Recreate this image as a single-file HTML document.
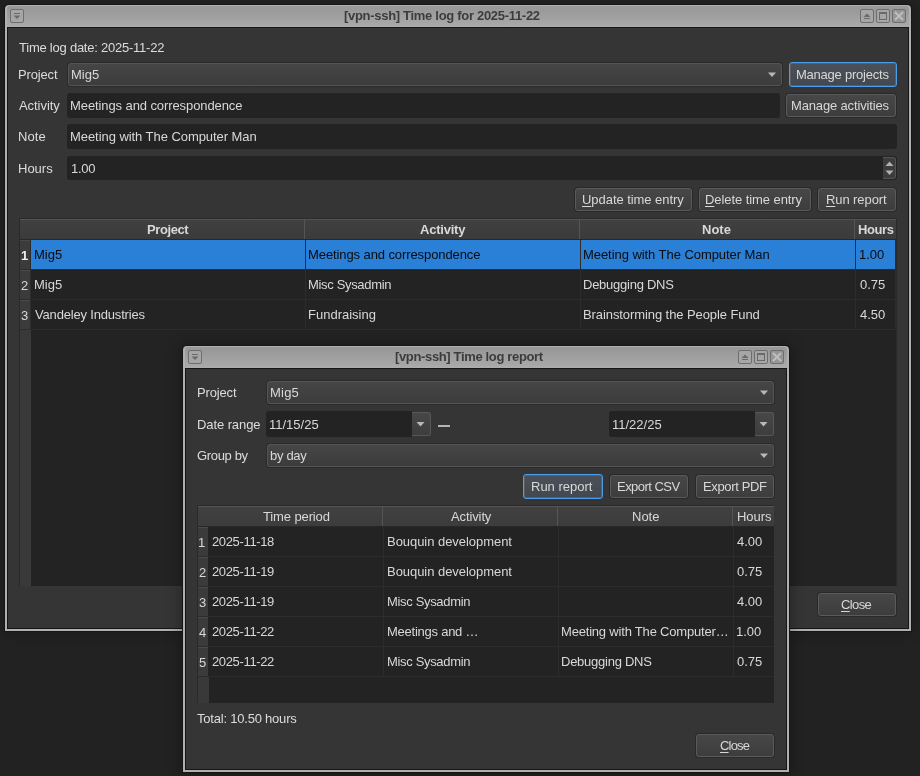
<!DOCTYPE html>
<html><head><meta charset="utf-8"><style>
html,body{margin:0;padding:0;width:920px;height:776px;overflow:hidden;background:#222222;font-family:"Liberation Sans", sans-serif;}
u{text-decoration:underline;text-underline-offset:2px;}
</style></head><body>
<div style="position:absolute;left:0;top:0;width:920px;height:776px;background:#222222"></div><div style="position:absolute;left:5px;top:5px;width:906px;height:626px;background:#b0b0b0;border-radius:4px 4px 0 0;box-shadow:0 0 0 1px #151515,0 0 14px 3px rgba(0,0,0,0.2);"></div><div style="position:absolute;left:7px;top:6px;width:902px;height:21px;background:linear-gradient(#989898,#9a9a9a 20%,#a8a8a8 90%,#adadad);border-radius:3px 3px 0 0;"></div><div style="position:absolute;left:7px;top:27px;width:902px;height:602px;background:#161616;"></div><div style="position:absolute;left:8px;top:28px;width:900px;height:600px;background:#353535;"></div><div style="position:absolute;left:10px;top:9px;width:14px;height:14px;border:1px solid #6e6e6e;border-radius:2px;box-sizing:border-box;background:#a6a6a6;"></div><svg style="position:absolute;left:10px;top:9px" width="14" height="14"><rect x="4" y="4" width="6" height="1" fill="#6a6a6a"/><path d="M3.5 6.5 L10.5 6.5 L7 10 Z" fill="#6a6a6a"/></svg><div style="position:absolute;left:860px;top:9px;width:14px;height:14px;border:1px solid #6e6e6e;border-radius:2px;box-sizing:border-box;background:#a6a6a6;"></div><svg style="position:absolute;left:860px;top:9px" width="14" height="14"><path d="M3.5 8 L10.5 8 L7 4.5 Z" fill="#6a6a6a"/><rect x="4" y="9" width="6" height="1" fill="#6a6a6a"/></svg><div style="position:absolute;left:876px;top:9px;width:14px;height:14px;border:1px solid #6e6e6e;border-radius:2px;box-sizing:border-box;background:#a6a6a6;"></div><svg style="position:absolute;left:876px;top:9px" width="14" height="14"><rect x="3.5" y="3.5" width="7" height="7" fill="none" stroke="#6a6a6a" stroke-width="1"/><rect x="3" y="3" width="8" height="2" fill="#6a6a6a"/></svg><div style="position:absolute;left:892px;top:9px;width:14px;height:14px;border:1px solid #6e6e6e;border-radius:2px;box-sizing:border-box;background:#959595;"></div><svg style="position:absolute;left:892px;top:9px" width="14" height="14"><path d="M3 3 L11 11 M11 3 L3 11" stroke="#bebebe" stroke-width="2"/></svg><span id="t0" style="position:absolute;left:344.00px;top:8.00px;line-height:16px;font-size:13px;font-weight:bold;color:#3c3c3c;white-space:pre;will-change:transform;letter-spacing:-0.300px;">[vpn-ssh] Time log for 2025-11-22</span><span id="t1" style="position:absolute;left:19.00px;top:39.50px;line-height:16px;font-size:13px;font-weight:normal;color:#dcdcdc;white-space:pre;will-change:transform;letter-spacing:-0.233px;">Time log date: 2025-11-22</span><span id="t2" style="position:absolute;left:18.36px;top:66.50px;line-height:16px;font-size:13px;font-weight:normal;color:#dcdcdc;white-space:pre;will-change:transform;letter-spacing:-0.160px;">Project</span><div style="position:absolute;left:68px;top:63px;width:714px;height:23px;box-sizing:border-box;border:1px solid #555;border-radius:3px;background:linear-gradient(#464646,#3c3c3c);box-shadow:0 0 0 1px rgba(0,0,0,0.2);"></div><svg style="position:absolute;left:766.5px;top:70.5px" width="10" height="8"><path d="M1 1.5 L9 1.5 L5 6 Z" fill="#b8b8b8"/></svg><span id="t3" style="position:absolute;left:71.30px;top:66.50px;line-height:16px;font-size:13px;font-weight:normal;color:#d8d8d8;white-space:pre;will-change:transform;letter-spacing:0.000px;">Mig5</span><div style="position:absolute;left:789px;top:62px;width:108px;height:25px;box-sizing:border-box;border:1px solid #4a9eea;border-radius:3px;background:linear-gradient(#4c5159,#434850);box-shadow:inset 0 0 0 1px #5a5d62;"></div><span id="t4" style="position:absolute;left:796.20px;top:66.50px;line-height:16px;font-size:13px;font-weight:normal;color:#d8d8d8;white-space:pre;will-change:transform;letter-spacing:-0.229px;">Manage projects</span><span id="t5" style="position:absolute;left:19.00px;top:97.50px;line-height:16px;font-size:13px;font-weight:normal;color:#dcdcdc;white-space:pre;will-change:transform;letter-spacing:-0.057px;">Activity</span><div style="position:absolute;left:67px;top:93px;width:713px;height:25px;background:#232323;border-radius:3px;"></div><span id="t6" style="position:absolute;left:69.80px;top:97.50px;line-height:16px;font-size:13px;font-weight:normal;color:#d8d8d8;white-space:pre;will-change:transform;letter-spacing:-0.092px;">Meetings and correspondence</span><div style="position:absolute;left:786px;top:94px;width:110px;height:23px;box-sizing:border-box;border:1px solid #5a5a5a;border-radius:3px;background:linear-gradient(#474747,#3d3d3d);box-shadow:0 0 0 1px rgba(0,0,0,0.22);"></div><span id="t7" style="position:absolute;left:791.42px;top:97.50px;line-height:16px;font-size:13px;font-weight:normal;color:#d8d8d8;white-space:pre;will-change:transform;letter-spacing:-0.150px;">Manage activities</span><span id="t8" style="position:absolute;left:18.36px;top:128.50px;line-height:16px;font-size:13px;font-weight:normal;color:#dcdcdc;white-space:pre;will-change:transform;letter-spacing:0.107px;">Note</span><div style="position:absolute;left:67px;top:124px;width:830px;height:25px;background:#232323;border-radius:3px;"></div><span id="t9" style="position:absolute;left:69.80px;top:128.50px;line-height:16px;font-size:13px;font-weight:normal;color:#d8d8d8;white-space:pre;will-change:transform;letter-spacing:-0.057px;">Meeting with The Computer Man</span><span id="t10" style="position:absolute;left:18.36px;top:160.50px;line-height:16px;font-size:13px;font-weight:normal;color:#dcdcdc;white-space:pre;will-change:transform;letter-spacing:0.000px;">Hours</span><div style="position:absolute;left:67px;top:156px;width:830px;height:24px;background:#232323;border-radius:3px;"></div><span id="t11" style="position:absolute;left:71.30px;top:160.50px;line-height:16px;font-size:13px;font-weight:normal;color:#d8d8d8;white-space:pre;will-change:transform;letter-spacing:-0.267px;">1.00</span><div style="position:absolute;left:883px;top:157px;width:13px;height:22px;box-sizing:border-box;border:1px solid #555;border-left:none;border-radius:0 3px 3px 0;background:#3c3c3c;"></div><svg style="position:absolute;left:883px;top:157px" width="13" height="22"><path d="M2.5 9 L10.5 9 L6.5 4.5 Z" fill="#b0b0b0"/><path d="M2.5 13.5 L10.5 13.5 L6.5 18 Z" fill="#b0b0b0"/></svg><div style="position:absolute;left:575px;top:188px;width:117px;height:23px;box-sizing:border-box;border:1px solid #5a5a5a;border-radius:3px;background:linear-gradient(#474747,#3d3d3d);box-shadow:0 0 0 1px rgba(0,0,0,0.22);"></div><span id="t12" style="position:absolute;left:582.00px;top:192.00px;line-height:16px;font-size:13px;font-weight:normal;color:#d8d8d8;white-space:pre;will-change:transform;letter-spacing:-0.050px;"><u>U</u>pdate time entry</span><div style="position:absolute;left:699px;top:188px;width:112px;height:23px;box-sizing:border-box;border:1px solid #5a5a5a;border-radius:3px;background:linear-gradient(#474747,#3d3d3d);box-shadow:0 0 0 1px rgba(0,0,0,0.22);"></div><span id="t13" style="position:absolute;left:705.10px;top:192.00px;line-height:16px;font-size:13px;font-weight:normal;color:#d8d8d8;white-space:pre;will-change:transform;letter-spacing:-0.075px;"><u>D</u>elete time entry</span><div style="position:absolute;left:818px;top:188px;width:78px;height:23px;box-sizing:border-box;border:1px solid #5a5a5a;border-radius:3px;background:linear-gradient(#474747,#3d3d3d);box-shadow:0 0 0 1px rgba(0,0,0,0.22);"></div><span id="t14" style="position:absolute;left:826.10px;top:192.00px;line-height:16px;font-size:13px;font-weight:normal;color:#d8d8d8;white-space:pre;will-change:transform;letter-spacing:-0.089px;"><u>R</u>un report</span><div style="position:absolute;left:19px;top:218px;width:878px;height:368px;background:#2a2a2a;"></div><div style="position:absolute;left:20px;top:219px;width:876px;height:367px;background:#232323;"></div><div style="position:absolute;left:20px;top:219px;width:876px;height:20px;background:linear-gradient(#404040,#3b3b3b);border-top:1px solid #555;box-sizing:border-box;"></div><div style="position:absolute;left:20px;top:239px;width:876px;height:1px;background:#2b2724;"></div><div style="position:absolute;left:304px;top:220px;width:1px;height:19px;background:#555;"></div><div style="position:absolute;left:579px;top:220px;width:1px;height:19px;background:#555;"></div><div style="position:absolute;left:854px;top:220px;width:1px;height:19px;background:#555;"></div><div style="position:absolute;left:20px;top:240px;width:10px;height:29px;background:#3b3b3b;border-top:1px solid #4a4a4a;box-sizing:border-box;"></div><div style="position:absolute;left:30px;top:240px;width:1px;height:30px;background:#2c2c2c;"></div><div style="position:absolute;left:31px;top:240px;width:864px;height:29px;background:#2a7fd6;"></div><div style="position:absolute;left:31px;top:269px;width:864px;height:1px;background:#2c2c2c;"></div><div style="position:absolute;left:20px;top:269px;width:10px;height:1px;background:#2c2c2c;"></div><span id="t15" style="position:absolute;left:21.10px;top:247.50px;line-height:16px;font-size:13px;font-weight:bold;color:#f0f0f0;white-space:pre;will-change:transform;letter-spacing:-4.000px;">1</span><span id="t16" style="position:absolute;left:34.20px;top:246.50px;line-height:16px;font-size:13px;font-weight:normal;color:#0c0c0c;white-space:pre;will-change:transform;letter-spacing:0.000px;">Mig5</span><span id="t17" style="position:absolute;left:308.30px;top:246.50px;line-height:16px;font-size:13px;font-weight:normal;color:#0c0c0c;white-space:pre;will-change:transform;letter-spacing:-0.092px;">Meetings and correspondence</span><span id="t18" style="position:absolute;left:583.30px;top:246.50px;line-height:16px;font-size:13px;font-weight:normal;color:#0c0c0c;white-space:pre;will-change:transform;letter-spacing:-0.057px;">Meeting with The Computer Man</span><span id="t19" style="position:absolute;left:858.80px;top:246.50px;line-height:16px;font-size:13px;font-weight:normal;color:#0c0c0c;white-space:pre;will-change:transform;">1.00</span><div style="position:absolute;left:20px;top:270px;width:10px;height:29px;background:#3b3b3b;border-top:1px solid #4a4a4a;box-sizing:border-box;"></div><div style="position:absolute;left:30px;top:270px;width:1px;height:30px;background:#2c2c2c;"></div><div style="position:absolute;left:31px;top:299px;width:864px;height:1px;background:#2c2c2c;"></div><div style="position:absolute;left:20px;top:299px;width:10px;height:1px;background:#2c2c2c;"></div><span id="t20" style="position:absolute;left:21.10px;top:277.50px;line-height:16px;font-size:13px;font-weight:normal;color:#d8d8d8;white-space:pre;will-change:transform;letter-spacing:-3.600px;">2</span><span id="t21" style="position:absolute;left:34.20px;top:276.50px;line-height:16px;font-size:13px;font-weight:normal;color:#d8d8d8;white-space:pre;will-change:transform;letter-spacing:0.000px;">Mig5</span><span id="t22" style="position:absolute;left:308.30px;top:276.50px;line-height:16px;font-size:13px;font-weight:normal;color:#d8d8d8;white-space:pre;will-change:transform;letter-spacing:-0.333px;">Misc Sysadmin</span><span id="t23" style="position:absolute;left:583.30px;top:276.50px;line-height:16px;font-size:13px;font-weight:normal;color:#d8d8d8;white-space:pre;will-change:transform;letter-spacing:-0.253px;">Debugging DNS</span><span id="t24" style="position:absolute;left:859.60px;top:276.50px;line-height:16px;font-size:13px;font-weight:normal;color:#d8d8d8;white-space:pre;will-change:transform;">0.75</span><div style="position:absolute;left:20px;top:300px;width:10px;height:29px;background:#3b3b3b;border-top:1px solid #4a4a4a;box-sizing:border-box;"></div><div style="position:absolute;left:30px;top:300px;width:1px;height:30px;background:#2c2c2c;"></div><div style="position:absolute;left:31px;top:329px;width:864px;height:1px;background:#2c2c2c;"></div><div style="position:absolute;left:20px;top:329px;width:10px;height:1px;background:#2c2c2c;"></div><span id="t25" style="position:absolute;left:21.10px;top:307.50px;line-height:16px;font-size:13px;font-weight:normal;color:#d8d8d8;white-space:pre;will-change:transform;letter-spacing:-3.600px;">3</span><span id="t26" style="position:absolute;left:35.00px;top:306.50px;line-height:16px;font-size:13px;font-weight:normal;color:#d8d8d8;white-space:pre;will-change:transform;letter-spacing:-0.178px;">Vandeley Industries</span><span id="t27" style="position:absolute;left:308.30px;top:306.50px;line-height:16px;font-size:13px;font-weight:normal;color:#d8d8d8;white-space:pre;will-change:transform;letter-spacing:0.000px;">Fundraising</span><span id="t28" style="position:absolute;left:583.30px;top:306.50px;line-height:16px;font-size:13px;font-weight:normal;color:#d8d8d8;white-space:pre;will-change:transform;letter-spacing:-0.086px;">Brainstorming the People Fund</span><span id="t29" style="position:absolute;left:859.60px;top:306.50px;line-height:16px;font-size:13px;font-weight:normal;color:#d8d8d8;white-space:pre;will-change:transform;">4.50</span><div style="position:absolute;left:20px;top:330px;width:11px;height:256px;background:#393939;"></div><div style="position:absolute;left:305px;top:240px;width:1px;height:90px;background:#2c2c2c;"></div><div style="position:absolute;left:580px;top:240px;width:1px;height:90px;background:#2c2c2c;"></div><div style="position:absolute;left:855px;top:240px;width:1px;height:90px;background:#2c2c2c;"></div><div style="position:absolute;left:895px;top:240px;width:1px;height:90px;background:#2c2c2c;"></div><span id="t30" style="position:absolute;left:146.86px;top:221.50px;line-height:16px;font-size:13px;font-weight:bold;color:#d8d8d8;white-space:pre;will-change:transform;letter-spacing:-0.400px;">Project</span><span id="t31" style="position:absolute;left:419.88px;top:221.50px;line-height:16px;font-size:13px;font-weight:bold;color:#d8d8d8;white-space:pre;will-change:transform;letter-spacing:-0.217px;">Activity</span><span id="t32" style="position:absolute;left:702.30px;top:221.50px;line-height:16px;font-size:13px;font-weight:bold;color:#d8d8d8;white-space:pre;will-change:transform;letter-spacing:0.000px;">Note</span><span id="t33" style="position:absolute;left:858.40px;top:221.50px;line-height:16px;font-size:13px;font-weight:bold;color:#d8d8d8;white-space:pre;will-change:transform;letter-spacing:-0.400px;">Hours</span><div style="position:absolute;left:818px;top:593px;width:78px;height:23px;box-sizing:border-box;border:1px solid #5a5a5a;border-radius:3px;background:linear-gradient(#474747,#3d3d3d);box-shadow:0 0 0 1px rgba(0,0,0,0.22);"></div><span id="t34" style="position:absolute;left:841.10px;top:597.00px;line-height:16px;font-size:13px;font-weight:normal;color:#d8d8d8;white-space:pre;will-change:transform;letter-spacing:-0.600px;"><u>C</u>lose</span><div style="position:absolute;left:183px;top:346px;width:606px;height:426px;background:#b0b0b0;border-radius:4px 4px 0 0;box-shadow:0 0 0 1px #151515,0 0 14px 3px rgba(0,0,0,0.28);"></div><div style="position:absolute;left:185px;top:347px;width:602px;height:21px;background:linear-gradient(#989898,#9a9a9a 20%,#a8a8a8 90%,#adadad);border-radius:3px 3px 0 0;"></div><div style="position:absolute;left:185px;top:368px;width:602px;height:402px;background:#161616;"></div><div style="position:absolute;left:186px;top:369px;width:600px;height:400px;background:#353535;"></div><div style="position:absolute;left:188px;top:350px;width:14px;height:14px;border:1px solid #6e6e6e;border-radius:2px;box-sizing:border-box;background:#a6a6a6;"></div><svg style="position:absolute;left:188px;top:350px" width="14" height="14"><rect x="4" y="4" width="6" height="1" fill="#6a6a6a"/><path d="M3.5 6.5 L10.5 6.5 L7 10 Z" fill="#6a6a6a"/></svg><div style="position:absolute;left:738px;top:350px;width:14px;height:14px;border:1px solid #6e6e6e;border-radius:2px;box-sizing:border-box;background:#a6a6a6;"></div><svg style="position:absolute;left:738px;top:350px" width="14" height="14"><path d="M3.5 8 L10.5 8 L7 4.5 Z" fill="#6a6a6a"/><rect x="4" y="9" width="6" height="1" fill="#6a6a6a"/></svg><div style="position:absolute;left:754px;top:350px;width:14px;height:14px;border:1px solid #6e6e6e;border-radius:2px;box-sizing:border-box;background:#a6a6a6;"></div><svg style="position:absolute;left:754px;top:350px" width="14" height="14"><rect x="3.5" y="3.5" width="7" height="7" fill="none" stroke="#6a6a6a" stroke-width="1"/><rect x="3" y="3" width="8" height="2" fill="#6a6a6a"/></svg><div style="position:absolute;left:770px;top:350px;width:14px;height:14px;border:1px solid #6e6e6e;border-radius:2px;box-sizing:border-box;background:#959595;"></div><svg style="position:absolute;left:770px;top:350px" width="14" height="14"><path d="M3 3 L11 11 M11 3 L3 11" stroke="#bebebe" stroke-width="2"/></svg><span id="t35" style="position:absolute;left:395.10px;top:349.00px;line-height:16px;font-size:13px;font-weight:bold;color:#3c3c3c;white-space:pre;will-change:transform;letter-spacing:-0.350px;">[vpn-ssh] Time log report</span><span id="t36" style="position:absolute;left:196.52px;top:384.50px;line-height:16px;font-size:13px;font-weight:normal;color:#dcdcdc;white-space:pre;will-change:transform;letter-spacing:-0.160px;">Project</span><div style="position:absolute;left:267px;top:381px;width:507px;height:23px;box-sizing:border-box;border:1px solid #555;border-radius:3px;background:linear-gradient(#464646,#3c3c3c);box-shadow:0 0 0 1px rgba(0,0,0,0.2);"></div><svg style="position:absolute;left:758.5px;top:388.5px" width="10" height="8"><path d="M1 1.5 L9 1.5 L5 6 Z" fill="#b8b8b8"/></svg><span id="t37" style="position:absolute;left:270.20px;top:384.50px;line-height:16px;font-size:13px;font-weight:normal;color:#d8d8d8;white-space:pre;will-change:transform;letter-spacing:0.213px;">Mig5</span><span id="t38" style="position:absolute;left:196.52px;top:416.50px;line-height:16px;font-size:13px;font-weight:normal;color:#dcdcdc;white-space:pre;will-change:transform;letter-spacing:-0.089px;">Date range</span><div style="position:absolute;left:266px;top:411px;width:146px;height:26px;background:#232323;border-radius:3px 0 0 3px;"></div><span id="t39" style="position:absolute;left:269.30px;top:416.50px;line-height:16px;font-size:13px;font-weight:normal;color:#d8d8d8;white-space:pre;will-change:transform;letter-spacing:0.000px;">11/15/25</span><div style="position:absolute;left:412px;top:412px;width:19px;height:24px;box-sizing:border-box;border:1px solid #575757;border-left:none;border-radius:0 3px 3px 0;background:linear-gradient(#474747,#3d3d3d);"></div><svg style="position:absolute;left:412px;top:412px" width="19" height="24"><path d="M4.5 10 L12.5 10 L8.5 14.5 Z" fill="#b8b8b8"/></svg><div style="position:absolute;left:438px;top:425px;width:12px;height:1.5px;background:#b4b4b4;"></div><div style="position:absolute;left:609px;top:411px;width:146px;height:26px;background:#232323;border-radius:3px 0 0 3px;"></div><span id="t40" style="position:absolute;left:612.30px;top:416.50px;line-height:16px;font-size:13px;font-weight:normal;color:#d8d8d8;white-space:pre;will-change:transform;letter-spacing:0.000px;">11/22/25</span><div style="position:absolute;left:755px;top:412px;width:19px;height:24px;box-sizing:border-box;border:1px solid #575757;border-left:none;border-radius:0 3px 3px 0;background:linear-gradient(#474747,#3d3d3d);"></div><svg style="position:absolute;left:755px;top:412px" width="19" height="24"><path d="M4.5 10 L12.5 10 L8.5 14.5 Z" fill="#b8b8b8"/></svg><span id="t41" style="position:absolute;left:197.32px;top:447.50px;line-height:16px;font-size:13px;font-weight:normal;color:#dcdcdc;white-space:pre;will-change:transform;letter-spacing:-0.343px;">Group by</span><div style="position:absolute;left:267px;top:444px;width:507px;height:23px;box-sizing:border-box;border:1px solid #555;border-radius:3px;background:linear-gradient(#464646,#3c3c3c);box-shadow:0 0 0 1px rgba(0,0,0,0.2);"></div><svg style="position:absolute;left:758.5px;top:451.5px" width="10" height="8"><path d="M1 1.5 L9 1.5 L5 6 Z" fill="#b8b8b8"/></svg><span id="t42" style="position:absolute;left:270.20px;top:447.50px;line-height:16px;font-size:13px;font-weight:normal;color:#d8d8d8;white-space:pre;will-change:transform;letter-spacing:-0.320px;">by day</span><div style="position:absolute;left:523px;top:474px;width:80px;height:25px;box-sizing:border-box;border:1px solid #4a9eea;border-radius:3px;background:linear-gradient(#4c5159,#434850);box-shadow:inset 0 0 0 1px #5a5d62;"></div><span id="t43" style="position:absolute;left:531.20px;top:479.00px;line-height:16px;font-size:13px;font-weight:normal;color:#d8d8d8;white-space:pre;will-change:transform;letter-spacing:0.000px;">Run report</span><div style="position:absolute;left:610px;top:475px;width:78px;height:23px;box-sizing:border-box;border:1px solid #5a5a5a;border-radius:3px;background:linear-gradient(#474747,#3d3d3d);box-shadow:0 0 0 1px rgba(0,0,0,0.22);"></div><span id="t44" style="position:absolute;left:617.20px;top:479.00px;line-height:16px;font-size:13px;font-weight:normal;color:#d8d8d8;white-space:pre;will-change:transform;letter-spacing:-0.533px;">Export CSV</span><div style="position:absolute;left:696px;top:475px;width:78px;height:23px;box-sizing:border-box;border:1px solid #5a5a5a;border-radius:3px;background:linear-gradient(#474747,#3d3d3d);box-shadow:0 0 0 1px rgba(0,0,0,0.22);"></div><span id="t45" style="position:absolute;left:703.20px;top:479.00px;line-height:16px;font-size:13px;font-weight:normal;color:#d8d8d8;white-space:pre;will-change:transform;letter-spacing:-0.356px;">Export PDF</span><div style="position:absolute;left:197px;top:505px;width:577px;height:198px;background:#2a2a2a;"></div><div style="position:absolute;left:198px;top:506px;width:576px;height:197px;background:#232323;"></div><div style="position:absolute;left:198px;top:506px;width:576px;height:20px;background:linear-gradient(#414141,#3c3c3c);border-top:1px solid #555;box-sizing:border-box;"></div><div style="position:absolute;left:198px;top:526px;width:576px;height:1px;background:#2b2724;"></div><div style="position:absolute;left:382px;top:507px;width:1px;height:19px;background:#555;"></div><div style="position:absolute;left:557px;top:507px;width:1px;height:19px;background:#555;"></div><div style="position:absolute;left:732px;top:507px;width:1px;height:19px;background:#555;"></div><div style="position:absolute;left:198px;top:527px;width:10px;height:29px;background:#3b3b3b;border-top:1px solid #4a4a4a;box-sizing:border-box;"></div><div style="position:absolute;left:208px;top:556px;width:565px;height:1px;background:#2c2c2c;"></div><div style="position:absolute;left:198px;top:556px;width:10px;height:1px;background:#2c2c2c;"></div><span id="t46" style="position:absolute;left:198.30px;top:534.50px;line-height:16px;font-size:13px;font-weight:normal;color:#d8d8d8;white-space:pre;will-change:transform;letter-spacing:-2.800px;">1</span><span id="t47" style="position:absolute;left:212.00px;top:533.50px;line-height:16px;font-size:13px;font-weight:normal;color:#d8d8d8;white-space:pre;will-change:transform;letter-spacing:-0.356px;">2025-11-18</span><span id="t48" style="position:absolute;left:386.64px;top:533.50px;line-height:16px;font-size:13px;font-weight:normal;color:#d8d8d8;white-space:pre;will-change:transform;letter-spacing:-0.044px;">Bouquin development</span><span id="t49" style="position:absolute;left:736.60px;top:533.50px;line-height:16px;font-size:13px;font-weight:normal;color:#d8d8d8;white-space:pre;will-change:transform;">4.00</span><div style="position:absolute;left:198px;top:557px;width:10px;height:29px;background:#3b3b3b;border-top:1px solid #4a4a4a;box-sizing:border-box;"></div><div style="position:absolute;left:208px;top:586px;width:565px;height:1px;background:#2c2c2c;"></div><div style="position:absolute;left:198px;top:586px;width:10px;height:1px;background:#2c2c2c;"></div><span id="t50" style="position:absolute;left:199.10px;top:564.50px;line-height:16px;font-size:13px;font-weight:normal;color:#d8d8d8;white-space:pre;will-change:transform;letter-spacing:-3.600px;">2</span><span id="t51" style="position:absolute;left:212.00px;top:563.50px;line-height:16px;font-size:13px;font-weight:normal;color:#d8d8d8;white-space:pre;will-change:transform;letter-spacing:-0.356px;">2025-11-19</span><span id="t52" style="position:absolute;left:386.64px;top:563.50px;line-height:16px;font-size:13px;font-weight:normal;color:#d8d8d8;white-space:pre;will-change:transform;letter-spacing:-0.044px;">Bouquin development</span><span id="t53" style="position:absolute;left:736.60px;top:563.50px;line-height:16px;font-size:13px;font-weight:normal;color:#d8d8d8;white-space:pre;will-change:transform;">0.75</span><div style="position:absolute;left:198px;top:587px;width:10px;height:29px;background:#3b3b3b;border-top:1px solid #4a4a4a;box-sizing:border-box;"></div><div style="position:absolute;left:208px;top:616px;width:565px;height:1px;background:#2c2c2c;"></div><div style="position:absolute;left:198px;top:616px;width:10px;height:1px;background:#2c2c2c;"></div><span id="t54" style="position:absolute;left:199.10px;top:594.50px;line-height:16px;font-size:13px;font-weight:normal;color:#d8d8d8;white-space:pre;will-change:transform;letter-spacing:-3.600px;">3</span><span id="t55" style="position:absolute;left:212.00px;top:593.50px;line-height:16px;font-size:13px;font-weight:normal;color:#d8d8d8;white-space:pre;will-change:transform;letter-spacing:-0.356px;">2025-11-19</span><span id="t56" style="position:absolute;left:386.64px;top:593.50px;line-height:16px;font-size:13px;font-weight:normal;color:#d8d8d8;white-space:pre;will-change:transform;letter-spacing:-0.333px;">Misc Sysadmin</span><span id="t57" style="position:absolute;left:736.60px;top:593.50px;line-height:16px;font-size:13px;font-weight:normal;color:#d8d8d8;white-space:pre;will-change:transform;">4.00</span><div style="position:absolute;left:198px;top:617px;width:10px;height:29px;background:#3b3b3b;border-top:1px solid #4a4a4a;box-sizing:border-box;"></div><div style="position:absolute;left:208px;top:646px;width:565px;height:1px;background:#2c2c2c;"></div><div style="position:absolute;left:198px;top:646px;width:10px;height:1px;background:#2c2c2c;"></div><span id="t58" style="position:absolute;left:199.10px;top:624.50px;line-height:16px;font-size:13px;font-weight:normal;color:#d8d8d8;white-space:pre;will-change:transform;letter-spacing:-3.600px;">4</span><span id="t59" style="position:absolute;left:212.00px;top:623.50px;line-height:16px;font-size:13px;font-weight:normal;color:#d8d8d8;white-space:pre;will-change:transform;letter-spacing:-0.356px;">2025-11-22</span><span id="t60" style="position:absolute;left:386.64px;top:623.50px;line-height:16px;font-size:13px;font-weight:normal;color:#d8d8d8;white-space:pre;will-change:transform;letter-spacing:-0.246px;">Meetings and …</span><span id="t61" style="position:absolute;left:561.30px;top:623.50px;line-height:16px;font-size:13px;font-weight:normal;color:#d8d8d8;white-space:pre;will-change:transform;letter-spacing:-0.192px;">Meeting with The Computer…</span><span id="t62" style="position:absolute;left:735.80px;top:623.50px;line-height:16px;font-size:13px;font-weight:normal;color:#d8d8d8;white-space:pre;will-change:transform;">1.00</span><div style="position:absolute;left:198px;top:647px;width:10px;height:29px;background:#3b3b3b;border-top:1px solid #4a4a4a;box-sizing:border-box;"></div><div style="position:absolute;left:208px;top:676px;width:565px;height:1px;background:#2c2c2c;"></div><div style="position:absolute;left:198px;top:676px;width:10px;height:1px;background:#2c2c2c;"></div><span id="t63" style="position:absolute;left:199.10px;top:654.50px;line-height:16px;font-size:13px;font-weight:normal;color:#d8d8d8;white-space:pre;will-change:transform;letter-spacing:-3.600px;">5</span><span id="t64" style="position:absolute;left:212.00px;top:653.50px;line-height:16px;font-size:13px;font-weight:normal;color:#d8d8d8;white-space:pre;will-change:transform;letter-spacing:-0.356px;">2025-11-22</span><span id="t65" style="position:absolute;left:386.64px;top:653.50px;line-height:16px;font-size:13px;font-weight:normal;color:#d8d8d8;white-space:pre;will-change:transform;letter-spacing:-0.333px;">Misc Sysadmin</span><span id="t66" style="position:absolute;left:561.30px;top:653.50px;line-height:16px;font-size:13px;font-weight:normal;color:#d8d8d8;white-space:pre;will-change:transform;letter-spacing:-0.253px;">Debugging DNS</span><span id="t67" style="position:absolute;left:736.60px;top:653.50px;line-height:16px;font-size:13px;font-weight:normal;color:#d8d8d8;white-space:pre;will-change:transform;">0.75</span><div style="position:absolute;left:198px;top:677px;width:11px;height:26px;background:#393939;"></div><div style="position:absolute;left:383px;top:527px;width:1px;height:150px;background:#2c2c2c;"></div><div style="position:absolute;left:558px;top:527px;width:1px;height:150px;background:#2c2c2c;"></div><div style="position:absolute;left:733px;top:527px;width:1px;height:150px;background:#2c2c2c;"></div><span id="t68" style="position:absolute;left:263.12px;top:508.50px;line-height:16px;font-size:13px;font-weight:normal;color:#d8d8d8;white-space:pre;will-change:transform;letter-spacing:-0.120px;">Time period</span><span id="t69" style="position:absolute;left:451.22px;top:508.50px;line-height:16px;font-size:13px;font-weight:normal;color:#d8d8d8;white-space:pre;will-change:transform;letter-spacing:-0.114px;">Activity</span><span id="t70" style="position:absolute;left:632.08px;top:508.50px;line-height:16px;font-size:13px;font-weight:normal;color:#d8d8d8;white-space:pre;will-change:transform;letter-spacing:0.000px;">Note</span><span id="t71" style="position:absolute;left:736.64px;top:508.50px;line-height:16px;font-size:13px;font-weight:normal;color:#d8d8d8;white-space:pre;will-change:transform;letter-spacing:-0.020px;">Hours</span><span id="t72" style="position:absolute;left:197.00px;top:710.50px;line-height:16px;font-size:13px;font-weight:normal;color:#dcdcdc;white-space:pre;will-change:transform;letter-spacing:-0.212px;">Total: 10.50 hours</span><div style="position:absolute;left:696px;top:734px;width:78px;height:23px;box-sizing:border-box;border:1px solid #5a5a5a;border-radius:3px;background:linear-gradient(#474747,#3d3d3d);box-shadow:0 0 0 1px rgba(0,0,0,0.22);"></div><span id="t73" style="position:absolute;left:720.00px;top:737.50px;line-height:16px;font-size:13px;font-weight:normal;color:#d8d8d8;white-space:pre;will-change:transform;letter-spacing:-0.820px;"><u>C</u>lose</span>
</body></html>
